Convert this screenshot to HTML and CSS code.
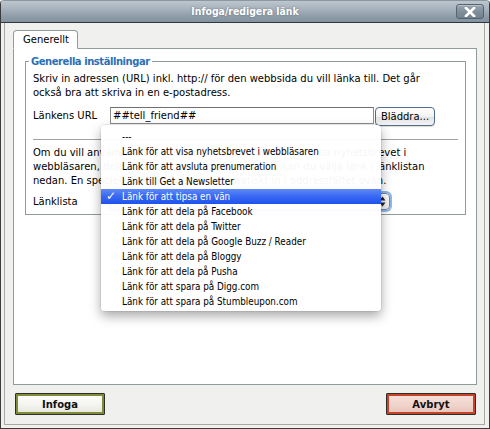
FILE: index.html
```html
<!DOCTYPE html>
<html lang="sv">
<head>
<meta charset="utf-8">
<title>Infoga/redigera länk</title>
<link rel="stylesheet" href="styles.css">
</head>
<body>
<div class="window">
  <div class="titlebar">
    <span class="title">Infoga/redigera länk</span>
    <button class="close" type="button" aria-label="Stäng">
      <svg width="12" height="10" viewBox="0 0 12 10"><path d="M2 1 L10 9 M10 1 L2 9" stroke="#fff" stroke-width="2.6" stroke-linecap="square"/></svg>
    </button>
  </div>
  <div class="frame">
    <div class="tabs"><span class="tab">Generellt</span></div>
    <div class="panel">
      <fieldset class="group">
        <legend>Generella inställningar</legend>
        <p class="help">Skriv in adressen (URL) inkl. http:// för den webbsida du vill länka till. Det går<br>också bra att skriva in en e-postadress.</p>
        <div class="row">
          <label class="lbl">Länkens URL</label>
          <div class="input">##tell_friend##</div>
          <button class="browse" type="button">Bläddra...</button>
        </div>
        <hr class="sep">
        <p class="help">Om du vill använda en speciallänk, t.ex. en länk för att visa nyhetsbrevet i<br>webbläsaren, dela på Facebook eller liknande, så kan du välja länk i länklistan<br>nedan. En speciell länkkod fylls då automatiskt in i addressfältet ovan.</p>
        <div class="row">
          <label class="lbl">Länklista</label>
          <div class="select">
            <span class="arrows">
              <svg width="7" height="11" viewBox="0 0 7 11"><path d="M3.5 0.5 L6.5 4.5 L0.5 4.5 Z M3.5 10.5 L6.5 6.5 L0.5 6.5 Z" fill="#222"/></svg>
            </span>
          </div>
        </div>
      </fieldset>
    </div>
    <div class="actions">
      <button class="btn ok" type="button">Infoga</button>
      <button class="btn cancel" type="button">Avbryt</button>
    </div>
  </div>

  <ul class="menu">
    <li>---</li>
    <li>Länk för att visa nyhetsbrevet i webbläsaren</li>
    <li>Länk för att avsluta prenumeration</li>
    <li>Länk till Get a Newsletter</li>
    <li class="selected"><span class="check">✓</span>Länk för att tipsa en vän</li>
    <li>Länk för att dela på Facebook</li>
    <li>Länk för att dela på Twitter</li>
    <li>Länk för att dela på Google Buzz / Reader</li>
    <li>Länk för att dela på Bloggy</li>
    <li>Länk för att dela på Pusha</li>
    <li>Länk för att spara på Digg.com</li>
    <li>Länk för att spara på Stumbleupon.com</li>
  </ul>
</div>
</body>
</html>
```
FILE: styles.css
```css
* { box-sizing: border-box; }

html, body {
  margin: 0;
  padding: 0;
  background: #ffffff;
}

body {
  font-family: "DejaVu Sans", Verdana, sans-serif;
  font-size: 10px;
  color: #000;
}

/* dialog window */
.window {
  position: relative;
  width: 490px;
  height: 429px;
  display: flex;
  flex-direction: column;
  background: #f0f0ee;
  border: 1px solid #3c3c3c;
  border-top-color: #8d979f;
  border-radius: 4px 4px 0 0;
  overflow: hidden;
}

.titlebar {
  height: 22px;
  flex: none;
  display: grid;
  grid-template-columns: 1fr auto 1fr;
  align-items: start;
  background: linear-gradient(#bcc6ce 0%, #a5b1bc 40%, #8e9ca9 75%, #83929f 100%);
  border-bottom: 1px solid #2f3840;
}

.title {
  grid-column: 2;
  line-height: 21px;
  font-family: "DejaVu Sans Condensed", "DejaVu Sans", sans-serif;
  font-weight: bold;
  font-size: 10.4px;
  color: #fff;
  text-shadow: 0 0 2px rgba(40, 55, 70, 0.55);
}

.close {
  grid-column: 3;
  justify-self: end;
  margin: 3px 5px 0 0;
  width: 28px;
  height: 15px;
  padding: 0;
  display: flex;
  align-items: center;
  justify-content: center;
  border: 1px solid #56636e;
  border-radius: 3px;
  background: linear-gradient(#9aa6b1, #7f8d9a 55%, #73828f);
  box-shadow: inset 0 1px 0 rgba(255, 255, 255, 0.3);
}

/* inner body of the dialog */
.frame {
  flex: 1;
  margin: 0 4px 3px 3px;
  border: 1px solid #a9a9a3;
  border-top: 0;
  padding: 7px 7px 0 8px;
  display: flex;
  flex-direction: column;
}

.tabs {
  height: 18px;
  flex: none;
  display: flex;
}

.tab {
  position: relative;
  z-index: 1;
  height: 19px;
  padding: 0 8px 0 9px;
  line-height: 17px;
  background: #fff;
  border: 1px solid #919b9c;
  border-bottom-color: #fff;
  border-radius: 4px 4px 0 0;
}

.panel {
  height: 337px;
  flex: none;
  background: #fff;
  border: 1px solid #919b9c;
  padding: 6px 10px 0 11px;
}

.group {
  margin: 0;
  border: 1px solid #919b9c;
  padding: 4px 7px 3px;
  min-width: 0;
}

.group legend {
  margin-left: -4px;
  padding: 0 2px;
  line-height: 13px;
  font-weight: bold;
  letter-spacing: -0.45px;
  color: #2b6fb6;
}

.help {
  margin: 0;
  line-height: 14px;
  white-space: nowrap;
}

.row {
  display: flex;
  align-items: flex-start;
  margin-top: 7px;
}

.lbl {
  width: 77px;
  flex: none;
  line-height: 17px;
}

.input {
  width: 264px;
  height: 17px;
  padding: 0 2px;
  line-height: 15px;
  border: 1px solid #8c8c8c;
  border-top-color: #6f6f6f;
  background: #fff;
}

.browse {
  margin-left: 1px;
  width: 60px;
  height: 19px;
  padding: 0;
  font: 10px "DejaVu Sans", sans-serif;
  color: #000;
  border: 1px solid #4f6c8e;
  border-radius: 4px;
  background: linear-gradient(#ffffff, #f2f2f2 50%, #e0e0e0 51%, #f4f4f4);
  box-shadow: 0 1px 1px rgba(0, 0, 0, 0.15);
}

.sep {
  margin: 13px 0 0;
  border: 0;
  border-top: 1px solid #a0a0a0;
  height: 0;
}

.sep + .help {
  margin-top: 6px;
}

.row:last-child {
  margin-top: 4px;
}

.row:last-child .lbl {
  line-height: 19px;
}

.select {
  position: relative;
  margin-top: 1px;
  width: 280px;
  height: 17px;
  border: 1px solid #6e89ad;
  border-radius: 4px;
  background: linear-gradient(#ffffff, #ededed);
  box-shadow: 0 0 0 2px rgba(103, 160, 226, 0.75);
  display: flex;
  justify-content: flex-end;
  align-items: center;
  padding-right: 3px;
}

.arrows {
  display: flex;
}

/* dialog buttons */
.actions {
  margin-top: 8px;
  display: flex;
  justify-content: space-between;
  padding: 0 1px 0 2px;
}

.btn {
  width: 90px;
  height: 22px;
  padding: 0;
  font: bold 10px "DejaVu Sans", sans-serif;
  color: #111;
  border: 1px solid #2e2e28;
  border-radius: 1px;
}

.btn.ok {
  background: linear-gradient(#ffffff, #f3f3ee 60%, #e4e4da);
  box-shadow: inset 0 0 0 2px #7f8c3a;
}

.btn.cancel {
  background: linear-gradient(#f6e2dc, #efd2ca 60%, #e6c2b8);
  box-shadow: inset 0 0 0 2px #c4432a;
}

/* popup list of the link select */
.menu {
  position: absolute;
  left: 100px;
  top: 124px;
  width: 280px;
  margin: 0;
  padding: 4px 0 2px;
  list-style: none;
  background: rgba(255, 255, 255, 0.96);
  border-radius: 4px;
  box-shadow: 0 5px 12px rgba(0, 0, 0, 0.35), 0 0 0 1px rgba(0, 0, 0, 0.06);
  font-family: "DejaVu Sans Condensed", "DejaVu Sans", sans-serif;
  font-size: 9.8px;
  z-index: 5;
}

.menu li {
  position: relative;
  height: 15px;
  line-height: 15px;
  padding-left: 21px;
  white-space: nowrap;
  color: #000;
}

.menu li.selected {
  color: #fff;
  background: linear-gradient(#5f88f6, #3868f2 50%, #1f52ee);
}

.check {
  position: absolute;
  left: 5px;
  top: 0;
  font-family: "DejaVu Sans", sans-serif;
  font-weight: bold;
  font-size: 12px;
}
```
